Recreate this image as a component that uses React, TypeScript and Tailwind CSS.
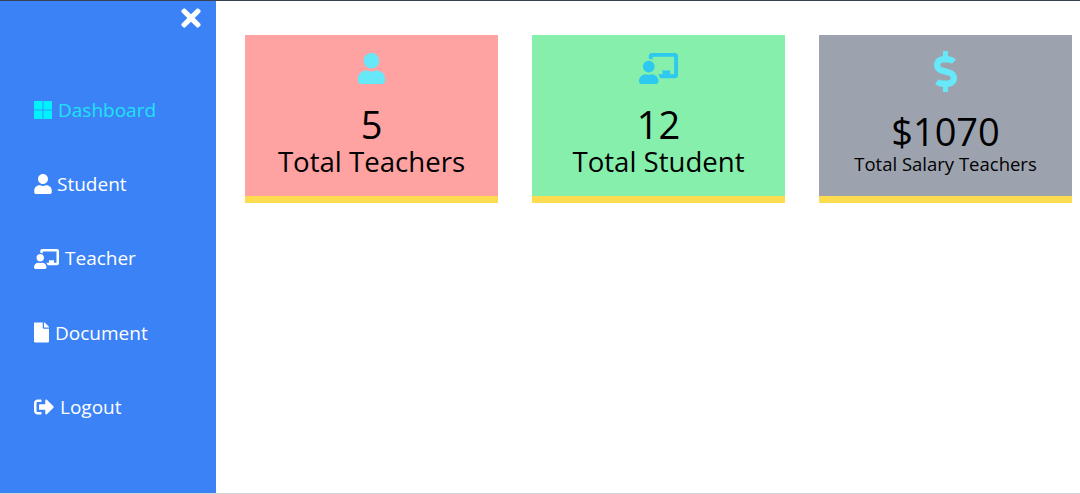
import { ReactNode } from "react";
import {
  FaChalkboardTeacher,
  FaDollarSign,
  FaFile,
  FaSignOutAlt,
  FaTimes,
  FaUser,
} from "react-icons/fa";

const WindowsIcon = () => (
  <svg viewBox="0 0 18 18" className="h-[18px] w-[18px] fill-[#00f2ff]">
    <rect x="0" y="0" width="8.6" height="8.6" />
    <rect x="9.4" y="0" width="8.6" height="8.6" />
    <rect x="0" y="9.4" width="8.6" height="8.6" />
    <rect x="9.4" y="9.4" width="8.6" height="8.6" />
  </svg>
);

const NavItem = ({
  icon,
  label,
  active,
  gap = "gap-[6px]",
}: {
  icon: ReactNode;
  label: string;
  active?: boolean;
  gap?: string;
}) => (
  <div
    className={`flex h-[30px] items-center text-[19px] ${gap} ${
      active ? "text-[#1ee3f8]" : "text-white"
    }`}
  >
    {icon}
    <span>{label}</span>
  </div>
);

const Card = ({
  bg,
  icon,
  value,
  label,
  salary,
}: {
  bg: string;
  icon: ReactNode;
  value: string;
  label: string;
  salary?: boolean;
}) => (
  <div
    className={`flex h-[168px] w-[253px] flex-col items-center border-b-[7px] border-[#fddd4f] text-black ${bg} ${
      salary ? "pt-[14px]" : "pt-[11px]"
    }`}
  >
    <div className="flex h-[45px] items-center">{icon}</div>
    <div
      className={`text-[38px] leading-[38px] ${salary ? "mt-[18px]" : "mt-[14px]"}`}
    >
      {value}
    </div>
    <div
      className={
        salary
          ? "mt-[1px] text-[18.5px] leading-[26px]"
          : "text-[27.6px] leading-[36px]"
      }
    >
      {label}
    </div>
  </div>
);

export default function App() {
  return (
    <div className="flex h-[494px] w-[1080px] overflow-hidden border-t border-b border-t-[#374151] border-b-gray-300 bg-white font-['Open_Sans','Noto_Sans',sans-serif]">
      <aside className="flex w-[216px] shrink-0 flex-col bg-[#3b82f6] pl-[34px]">
        <div className="flex h-[34px] items-center justify-end pr-[11px]">
          <FaTimes className="text-[28px] text-white" />
        </div>
        <nav className="mt-[60px] flex flex-col gap-[44.25px]">
          <NavItem active label="Dashboard" icon={<WindowsIcon />} />
          <NavItem
            gap="gap-[5px]"
            label="Student"
            icon={<FaUser className="h-[20px] w-[18px]" />}
          />
          <NavItem
            label="Teacher"
            icon={<FaChalkboardTeacher className="h-[20px] w-[25px]" />}
          />
          <NavItem
            label="Document"
            icon={<FaFile className="h-[21px] w-[15px]" />}
          />
          <NavItem
            label="Logout"
            icon={<FaSignOutAlt className="h-[20px] w-[20px]" />}
          />
        </nav>
      </aside>
      <main className="flex flex-1 items-start gap-[34px] pl-[29px] pt-[34px]">
        <Card
          bg="bg-[#ffa2a2]"
          value="5"
          label="Total Teachers"
          icon={<FaUser className="text-[31px] text-[#67e8f9]" />}
        />
        <Card
          bg="bg-[#86efac]"
          value="12"
          label="Total Student"
          icon={<FaChalkboardTeacher className="text-[39px] text-[#2dc9ee]" />}
        />
        <Card
          salary
          bg="bg-[#9ca3af]"
          value="$1070"
          label="Total Salary Teachers"
          icon={<FaDollarSign className="text-[41px] text-[#67e8f9]" />}
        />
      </main>
    </div>
  );
}
